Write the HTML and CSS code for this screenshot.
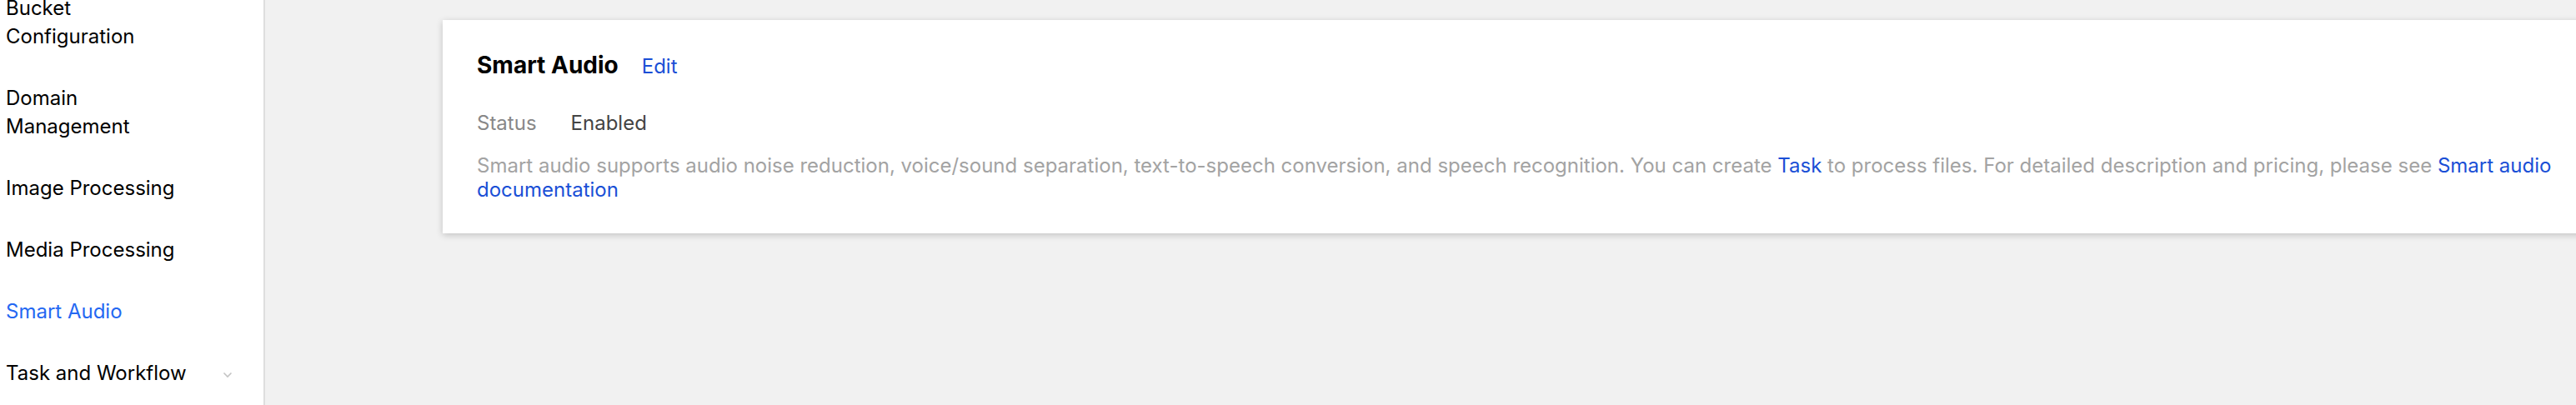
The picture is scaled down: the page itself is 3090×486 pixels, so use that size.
FILE: index.html
```html
<!DOCTYPE html>
<html lang="en">
<head>
<meta charset="utf-8">
<title>Smart Audio</title>
<link rel="stylesheet" href="styles.css">
</head>
<body>
<div class="layout">
  <aside class="sidebar">
    <ul class="nav">
      <li class="nav-item">Bucket<br>Configuration</li>
      <li class="nav-item">Domain<br>Management</li>
      <li class="nav-item">Image Processing</li>
      <li class="nav-item">Media Processing</li>
      <li class="nav-item active">Smart Audio</li>
      <li class="nav-item has-sub">Task and Workflow
        <svg class="chevron" width="12" height="8" viewBox="0 0 12 8"><path d="M1.5 1.5 L6 6 L10.5 1.5" fill="none" stroke="#c4c4c4" stroke-width="1.6"/></svg>
      </li>
    </ul>
  </aside>
  <main class="main">
    <section class="card">
      <div class="card-head">
        <h2 class="card-title">Smart Audio</h2>
        <a class="link edit">Edit</a>
      </div>
      <div class="field">
        <span class="field-label">Status</span>
        <span class="field-value">Enabled</span>
      </div>
      <p class="desc">Smart audio supports audio noise reduction, voice/sound separation, text-to-speech conversion, and speech recognition. You can create <a class="link">Task</a> to process files. For detailed description and pricing, please see <a class="link">Smart audio documentation</a></p>
    </section>
  </main>
</div>
</body>
</html>
```
FILE: styles.css
```css
* { box-sizing: border-box; }
html, body {
  margin: 0;
  padding: 0;
  height: 100%;
  overflow: hidden;
}
body {
  font-family: Inter, "Noto Sans", "Liberation Sans", sans-serif;
  background: #f1f1f1;
  color: #000;
}
.layout {
  display: flex;
  height: 486px;
}
.sidebar {
  width: 318px;
  flex: none;
  background: #fff;
  border-right: 2px solid #dedede;
  overflow: hidden;
}
.nav {
  list-style: none;
  margin: -27px 0 0 0;
  padding: 0;
}
.nav-item {
  position: relative;
  padding: 20px 7px;
  font-size: 24px;
  line-height: 34px;
  color: #000;
}
.nav-item.active { color: #2468f2; }
.chevron {
  position: absolute;
  left: 267px;
  top: 35px;
}
.main {
  flex: 1;
  min-width: 0;
  padding: 24px 0 0 213px;
  overflow: hidden;
}
.card {
  width: 2660px;
  height: 256px;
  background: #fff;
  box-shadow: 0 2px 8px rgba(0, 0, 0, 0.2);
  padding: 36px 41px 0 41px;
}
.card-head {
  display: flex;
  align-items: baseline;
  gap: 28px;
}
.card-title {
  margin: 0;
  font-size: 28px;
  line-height: 36px;
  font-weight: 700;
  color: #000;
}
.link {
  color: #1a4fd6;
  cursor: pointer;
}
.edit { font-size: 24px; }
.field {
  display: flex;
  gap: 41px;
  margin-top: 35px;
  font-size: 24px;
  line-height: 34px;
}
.field-label { color: #888; }
.field-value { color: #444; }
.desc {
  margin: 19px 0 0 0;
  font-size: 24px;
  line-height: 29px;
  color: #a3a3a3;
}
```
